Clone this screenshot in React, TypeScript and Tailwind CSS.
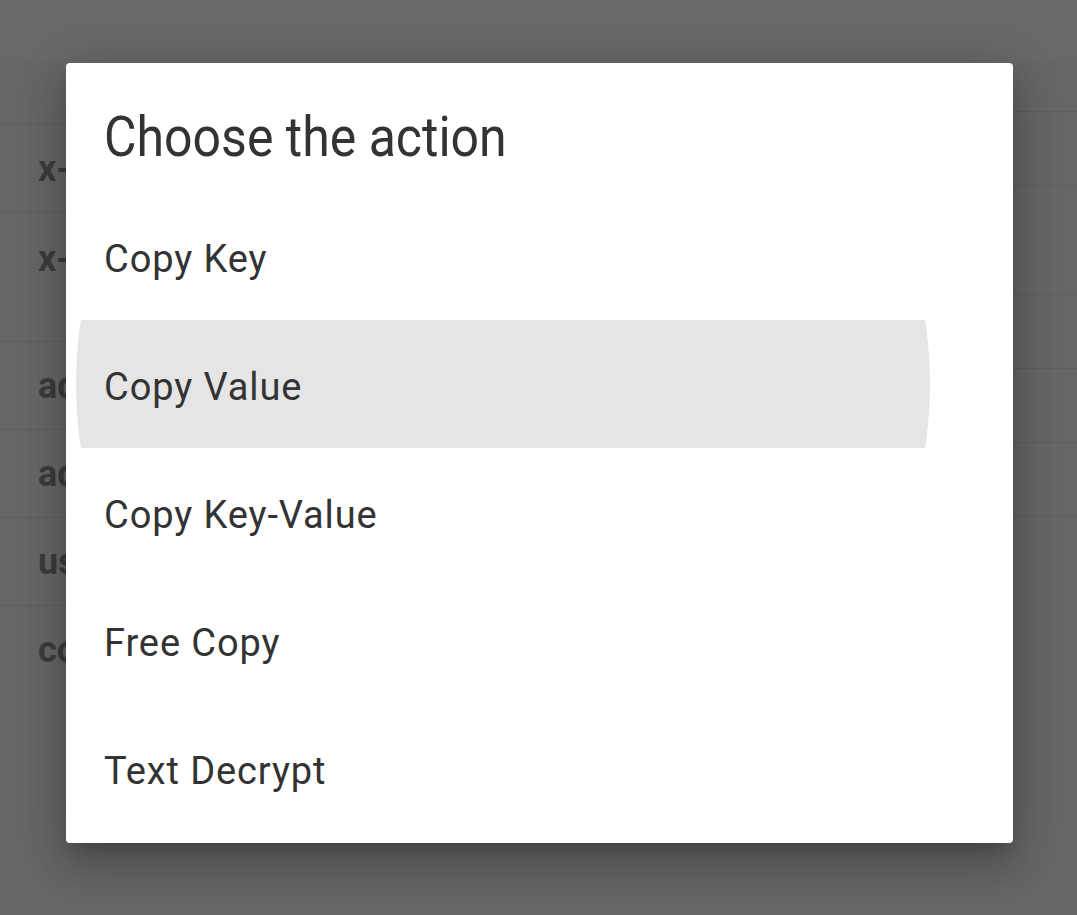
const leftRows = [
  { h: 63, label: "" },
  { h: 88, label: "x-" },
  { h: 129, label: "x-", top: true },
  { h: 88, label: "ad" },
  { h: 88, label: "ad" },
  { h: 88, label: "us" },
];

const rightRows = [50, 74, 109, 74, 74, 74];

const actions = ["Copy Key", "Copy Value", "Copy Key-Value", "Free Copy", "Text Decrypt"];

export default function App() {
  return (
    <div
      className="relative h-[915px] w-[1077px] overflow-hidden bg-[#666666]"
      style={{ fontFamily: "Roboto, 'Noto Sans', sans-serif" }}
    >
      {/* Background screen (dimmed) */}
      <div className="h-[62px] bg-[#686868]" />
      <div className="flex">
        <div className="w-[66px]">
          {leftRows.map((r, i) => (
            <div
              key={i}
              className={`flex border-b border-[#5e5e5e] pl-[38px] ${r.top ? "items-start pt-[28px]" : "items-center"}`}
              style={{ height: r.h }}
            >
              <span className="whitespace-nowrap text-[36px] font-bold leading-none text-[#3b3b3b]">
                {r.label}
              </span>
            </div>
          ))}
          <div className="flex h-[88px] items-center pl-[38px]">
            <span className="whitespace-nowrap text-[36px] font-bold leading-none text-[#3b3b3b]">co</span>
          </div>
        </div>
        <div className="flex-1" />
        <div className="w-[64px]">
          {rightRows.map((h, i) => (
            <div key={i} className="border-b border-[#5e5e5e]" style={{ height: h }} />
          ))}
        </div>
      </div>

      {/* Dialog */}
      <div className="absolute left-[66px] top-[63px] w-[947px] rounded-[4px] bg-white pb-[11px] shadow-[0_24px_38px_3px_rgba(0,0,0,0.14),0_9px_46px_8px_rgba(0,0,0,0.12),0_11px_15px_-7px_rgba(0,0,0,0.2)]">
        <div className="flex h-[129px] items-center pl-[38px] pt-[18px]">
          <h2 className="origin-center scale-y-[1.12] text-[50px] font-normal leading-none text-[#333333]">
            Choose the action
          </h2>
        </div>
        {actions.map((a, i) => (
          <div key={a} className="relative flex h-[128px] items-center overflow-hidden pl-[38px] pt-[5px]">
            {i === 1 && (
              <div className="absolute left-[10px] top-[-363px] h-[854px] w-[854px] rounded-full bg-[#e5e5e5]" />
            )}
            <span className="relative text-[38px] leading-none tracking-[0.9px] text-[#333333]">{a}</span>
          </div>
        ))}
      </div>
    </div>
  );
}
